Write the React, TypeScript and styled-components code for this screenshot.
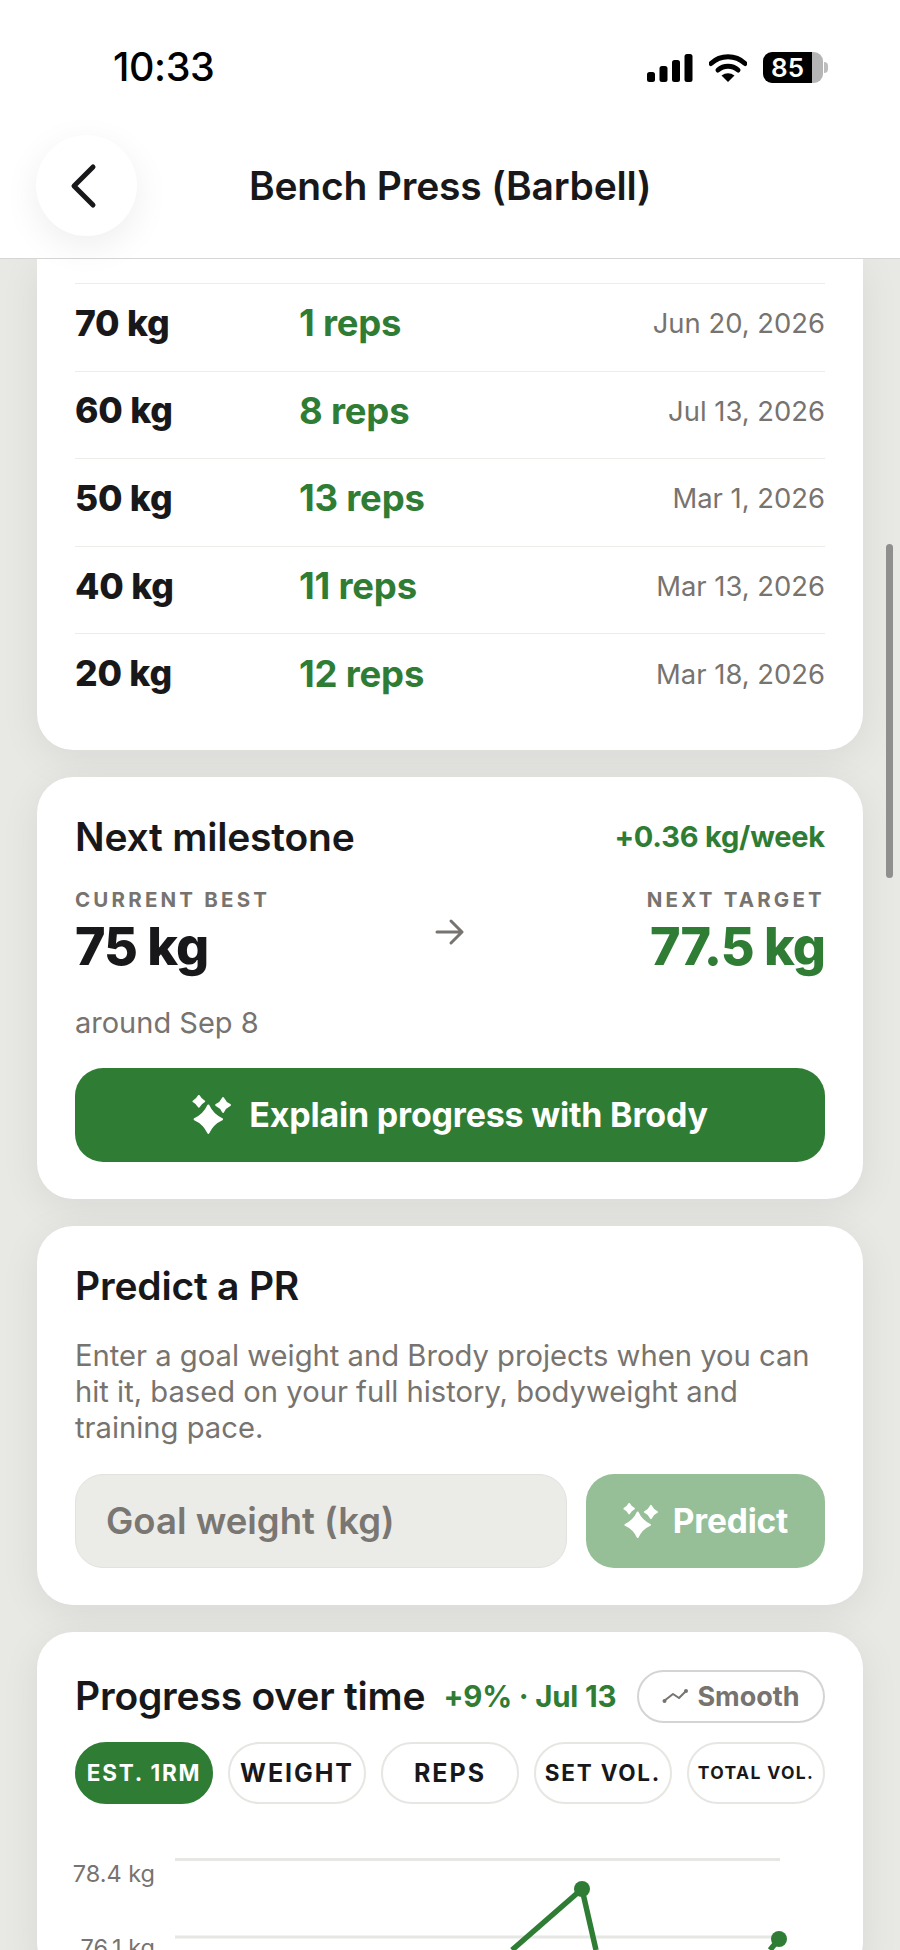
import { FC } from 'react';
import styled, { createGlobalStyle } from 'styled-components';

const GREEN = '#2f7d34';
const INK = '#18181a';
const MUTED = '#77736f';

const rows = [
  { weight: '70 kg', reps: '1 reps', date: 'Jun 20, 2026' },
  { weight: '60 kg', reps: '8 reps', date: 'Jul 13, 2026' },
  { weight: '50 kg', reps: '13 reps', date: 'Mar 1, 2026' },
  { weight: '40 kg', reps: '11 reps', date: 'Mar 13, 2026' },
  { weight: '20 kg', reps: '12 reps', date: 'Mar 18, 2026' },
];

const chips = [
  { label: 'EST. 1RM', size: 22.5, active: true },
  { label: 'WEIGHT', size: 25 },
  { label: 'REPS', size: 25 },
  { label: 'SET VOL.', size: 22.5 },
  { label: 'TOTAL VOL.', size: 17.5 },
];

const Sparkle: FC<{ size: number }> = ({ size }) => (
  <svg width={size} height={size} viewBox="0 0 38 38" fill="#fff" stroke="#fff" strokeWidth="2" strokeLinejoin="round">
    <path d="M15.5 10 Q19.5 19 28.5 23 Q19.5 27 15.5 36 Q11.5 27 2.5 23 Q11.5 19 15.5 10 Z" />
    <path d="M6.5 1 Q8.2 4.3 11.5 6 Q8.2 7.7 6.5 11 Q4.8 7.7 1.5 6 Q4.8 4.3 6.5 1 Z" />
    <path d="M29.5 3 Q31.5 7.5 36 9.5 Q31.5 11.5 29.5 16 Q27.5 11.5 23 9.5 Q27.5 7.5 29.5 3 Z" />
  </svg>
);

export default function App() {
  return (
    <Page>
      <GlobalStyle />
      <Header>
        <StatusBar>
          <Clock>10:33</Clock>
          <StatusIcons>
            <svg width="46" height="28" viewBox="0 0 46 28" fill="#000">
              <rect x="0" y="18" width="8" height="10" rx="2.5" />
              <rect x="12.5" y="12" width="8" height="16" rx="2.5" />
              <rect x="25" y="6" width="8" height="22" rx="2.5" />
              <rect x="37.5" y="0" width="8" height="28" rx="2.5" />
            </svg>
            <svg width="38" height="28" viewBox="0 0 38 28">
              <path d="M2 9.5 A 25 25 0 0 1 36 9.5" fill="none" stroke="#000" strokeWidth="5" strokeLinecap="round" />
              <path d="M9 16 A 15 15 0 0 1 29 16" fill="none" stroke="#000" strokeWidth="5" strokeLinecap="round" />
              <path d="M12.5 21.5 Q19 17 25.5 21.5 L19 28 Z" fill="#000" />
            </svg>
            <Battery>
              <BatteryBody>85</BatteryBody>
              <BatteryNub />
            </Battery>
          </StatusIcons>
        </StatusBar>
        <NavBar>
          <BackButton aria-label="Back">
            <svg width="30" height="46" viewBox="0 0 30 46" fill="none">
              <path d="M24 4 L5 23 L24 42" stroke={INK} strokeWidth="5" strokeLinecap="round" strokeLinejoin="round" />
            </svg>
          </BackButton>
          <Title>Bench Press (Barbell)</Title>
        </NavBar>
      </Header>

      <Content>
        <HistoryCard>
          {rows.map((row) => (
            <HistoryRow key={row.weight}>
              <Weight>{row.weight}</Weight>
              <Reps>{row.reps}</Reps>
              <DateText>{row.date}</DateText>
            </HistoryRow>
          ))}
        </HistoryCard>

        <Card>
          <SpacedRow>
            <CardTitle>Next milestone</CardTitle>
            <Pace>+0.36 kg/week</Pace>
          </SpacedRow>
          <Milestone>
            <div>
              <Eyebrow>CURRENT BEST</Eyebrow>
              <BigValue>75 kg</BigValue>
            </div>
            <svg width="30" height="30" viewBox="0 0 30 30" fill="none">
              <path d="M2 15 H27 M16 4 L27 15 L16 26" stroke={MUTED} strokeWidth="3" strokeLinecap="round" strokeLinejoin="round" />
            </svg>
            <TargetBlock>
              <Eyebrow>NEXT TARGET</Eyebrow>
              <BigValue $green>77.5 kg</BigValue>
            </TargetBlock>
          </Milestone>
          <Around>around Sep 8</Around>
          <ExplainButton>
            <Sparkle size={40} />
            Explain progress with Brody
          </ExplainButton>
        </Card>

        <Card>
          <CardTitle>Predict a PR</CardTitle>
          <Description>
            Enter a goal weight and Brody projects when you can hit it, based on your full history, bodyweight and
            training pace.
          </Description>
          <PredictRow>
            <GoalInput placeholder="Goal weight (kg)" />
            <PredictButton>
              <Sparkle size={36} />
              Predict
            </PredictButton>
          </PredictRow>
        </Card>

        <ProgressCard>
          <SpacedRow>
            <CardTitle>Progress over time</CardTitle>
            <Delta>+9% · Jul 13</Delta>
            <SmoothToggle>
              <svg width="26" height="16" viewBox="0 0 26 16" fill="none">
                <path d="M2 13 L11 6 L17 10 L24 3" stroke={MUTED} strokeWidth="2" strokeLinecap="round" strokeLinejoin="round" />
                <circle cx="2.5" cy="13" r="2" fill={MUTED} />
                <circle cx="24" cy="3" r="2" fill={MUTED} />
              </svg>
              Smooth
            </SmoothToggle>
          </SpacedRow>
          <ChipRow>
            {chips.map((chip) => (
              <Chip key={chip.label} $active={chip.active} $size={chip.size}>
                {chip.label}
              </Chip>
            ))}
          </ChipRow>
          <Chart>
            <AxisLabels>
              <AxisLabel>78.4 kg</AxisLabel>
              <AxisLabel>76.1 kg</AxisLabel>
            </AxisLabels>
            <svg width="650" height="120" viewBox="0 0 650 120" fill="none">
              <path d="M0 1.5 H605 M0 79 H605" stroke="#e6e6e4" strokeWidth="3" />
              <path d="M337 92 L407 31 L421 92" stroke={GREEN} strokeWidth="5.5" strokeLinejoin="round" />
              <path d="M604 81 L595 92" stroke={GREEN} strokeWidth="5.5" />
              <circle cx="407" cy="31" r="8" fill={GREEN} />
              <circle cx="604" cy="81" r="8" fill={GREEN} />
            </svg>
          </Chart>
        </ProgressCard>
      </Content>

      <ScrollThumb />
    </Page>
  );
}

const GlobalStyle = createGlobalStyle`
  html, body {
    margin: 0;
    padding: 0;
    background: #e8e9e5;
    overflow: hidden;
  }
  * {
    box-sizing: border-box;
  }
`;

const Page = styled.div`
  position: relative;
  width: 900px;
  height: 1950px;
  overflow: hidden;
  background: #e8e9e5;
  font-family: Inter, 'Liberation Sans', sans-serif;
  color: ${INK};
`;

const Header = styled.header`
  position: relative;
  z-index: 2;
  height: 259px;
  background: #fff;
  border-bottom: 1px solid #d6d6d4;
`;

const StatusBar = styled.div`
  height: 135px;
  padding: 46px 72px 0 113px;
  display: flex;
  justify-content: space-between;
  align-items: flex-start;
`;

const Clock = styled.div`
  font-size: 39.5px;
  line-height: 42px;
  font-weight: 500;
  letter-spacing: -0.4px;
  color: #000;
`;

const StatusIcons = styled.div`
  display: flex;
  align-items: center;
  gap: 16px;
  margin-top: 6px;
`;

const Battery = styled.div`
  display: flex;
  align-items: center;
  gap: 1px;
`;

const BatteryBody = styled.div`
  width: 60px;
  height: 31px;
  border-radius: 9px;
  padding-right: 11px;
  background: linear-gradient(90deg, #000 82%, #b5b5b5 82%);
  color: #fff;
  font-size: 26px;
  line-height: 31px;
  font-weight: 600;
  text-align: center;
`;

const BatteryNub = styled.div`
  width: 4px;
  height: 11px;
  border-radius: 0 4px 4px 0;
  background: #bdbdbd;
`;

const NavBar = styled.div`
  height: 101px;
  padding-left: 36px;
  display: grid;
  grid-template-columns: 101px auto;
  align-items: center;
`;

const BackButton = styled.button`
  width: 101px;
  height: 101px;
  border: 0;
  padding: 0 6px 0 0;
  border-radius: 50%;
  background: #fff;
  display: flex;
  align-items: center;
  justify-content: center;
  box-shadow: 0 10px 36px rgba(0, 0, 0, 0.07);
`;

const Title = styled.h1`
  margin: 0 0 0 112px;
  font-size: 39px;
  line-height: 46px;
  font-weight: 600;
  letter-spacing: -0.2px;
  white-space: nowrap;
`;

const Content = styled.main`
  padding: 0 37px;
  display: flex;
  flex-direction: column;
  gap: 27px;
`;

const Card = styled.section`
  background: #fff;
  border-radius: 36px;
  padding: 37px 38px;
  box-shadow: 0 8px 40px rgba(0, 0, 0, 0.07);
`;

const HistoryCard = styled(Card)`
  border-radius: 0 0 36px 36px;
  padding: 24px 38px 29px;
`;

const HistoryRow = styled.div`
  height: 87.6px;
  padding-bottom: 8px;
  border-top: 1px solid #ecece9;
  display: grid;
  grid-template-columns: 224px 1fr auto;
  align-items: center;
`;

const Weight = styled.div`
  font-size: 35.5px;
  font-weight: 800;
  letter-spacing: -0.2px;
`;

const Reps = styled.div`
  font-size: 36.5px;
  font-weight: 700;
  letter-spacing: -0.2px;
  color: ${GREEN};
`;

const DateText = styled.div`
  font-size: 27.4px;
  font-weight: 400;
  color: ${MUTED};
`;

const SpacedRow = styled.div`
  display: flex;
  align-items: center;
  justify-content: space-between;
`;

const CardTitle = styled.h2`
  margin: 0;
  font-size: 39px;
  line-height: 46px;
  font-weight: 600;
  letter-spacing: -0.2px;
  white-space: nowrap;
`;

const Pace = styled.div`
  font-size: 29px;
  font-weight: 700;
  letter-spacing: -0.2px;
  color: ${GREEN};
`;

const Milestone = styled.div`
  margin-top: 28px;
  display: grid;
  grid-template-columns: 1fr auto 1fr;
  align-items: center;
`;

const TargetBlock = styled.div`
  text-align: right;
`;

const Eyebrow = styled.div`
  font-size: 20.5px;
  line-height: 24px;
  font-weight: 700;
  letter-spacing: 3.2px;
  color: ${MUTED};
`;

const BigValue = styled.div<{ $green?: boolean }>`
  margin-top: 6px;
  font-size: 52px;
  line-height: 58px;
  font-weight: 800;
  letter-spacing: -1px;
  color: ${({ $green }) => ($green ? GREEN : INK)};
`;

const Around = styled.div`
  margin-top: 29px;
  font-size: 29px;
  line-height: 36px;
  color: ${MUTED};
`;

const ExplainButton = styled.button`
  width: 100%;
  height: 94px;
  margin-top: 27px;
  border: 0;
  border-radius: 28px;
  background: ${GREEN};
  color: #fff;
  display: flex;
  align-items: center;
  justify-content: center;
  gap: 17px;
  font-family: inherit;
  font-size: 34px;
  font-weight: 700;
  letter-spacing: -0.2px;
`;

const Description = styled.p`
  margin: 29px 0 0;
  font-size: 29.2px;
  line-height: 36px;
  color: ${MUTED};
`;

const PredictRow = styled.div`
  margin-top: 28px;
  display: grid;
  grid-template-columns: 492px 1fr;
  gap: 19px;
`;

const GoalInput = styled.input`
  height: 94px;
  min-width: 0;
  padding: 0 30px;
  border: 1px solid #e2e2de;
  border-radius: 28px;
  background: #ebebe8;
  font-family: inherit;
  font-size: 36.5px;
  font-weight: 600;
  &::placeholder {
    color: #7a7672;
    opacity: 1;
  }
`;

const PredictButton = styled.button`
  height: 94px;
  border: 0;
  border-radius: 28px;
  background: #96bf98;
  color: #fff;
  display: flex;
  align-items: center;
  justify-content: center;
  gap: 14px;
  font-family: inherit;
  font-size: 33.5px;
  font-weight: 700;
  letter-spacing: -0.2px;
`;

const ProgressCard = styled(Card)`
  padding: 38px 38px 0;
`;

const Delta = styled.div`
  margin-left: 18px;
  font-size: 29.5px;
  font-weight: 700;
  letter-spacing: -0.2px;
  color: ${GREEN};
  white-space: nowrap;
`;

const SmoothToggle = styled.button`
  margin-left: auto;
  width: 188px;
  height: 53px;
  flex: none;
  border: 2px solid #d4d4d2;
  border-radius: 27px;
  background: #fff;
  color: ${MUTED};
  display: flex;
  align-items: center;
  justify-content: center;
  gap: 9px;
  padding: 0;
  font-family: inherit;
  font-size: 27px;
  font-weight: 700;
`;

const ChipRow = styled.div`
  margin-top: 19px;
  display: grid;
  grid-template-columns: repeat(5, 1fr);
  gap: 15px;
`;

const Chip = styled.div<{ $active?: boolean; $size: number }>`
  height: 62px;
  border-radius: 31px;
  border: 2px solid ${({ $active }) => ($active ? GREEN : '#e6e6e3')};
  background: ${({ $active }) => ($active ? GREEN : '#fff')};
  color: ${({ $active }) => ($active ? '#fff' : INK)};
  display: flex;
  align-items: center;
  justify-content: center;
  font-size: ${({ $size }) => $size}px;
  font-weight: 700;
  letter-spacing: ${({ $size }) => $size * 0.078}px;
  white-space: nowrap;
`;

const Chart = styled.div`
  margin-top: 54px;
  display: grid;
  grid-template-columns: 100px 1fr;
`;

const AxisLabels = styled.div`
  padding: 0 20px 0 0;
  display: flex;
  flex-direction: column;
  align-items: flex-end;
  gap: 42px;
`;

const AxisLabel = styled.div`
  font-size: 23.5px;
  line-height: 32px;
  color: ${MUTED};
  white-space: nowrap;
`;

const ScrollThumb = styled.div`
  position: absolute;
  top: 544px;
  left: 886px;
  width: 7px;
  height: 334px;
  border-radius: 4px;
  background: #8f908d;
`;
